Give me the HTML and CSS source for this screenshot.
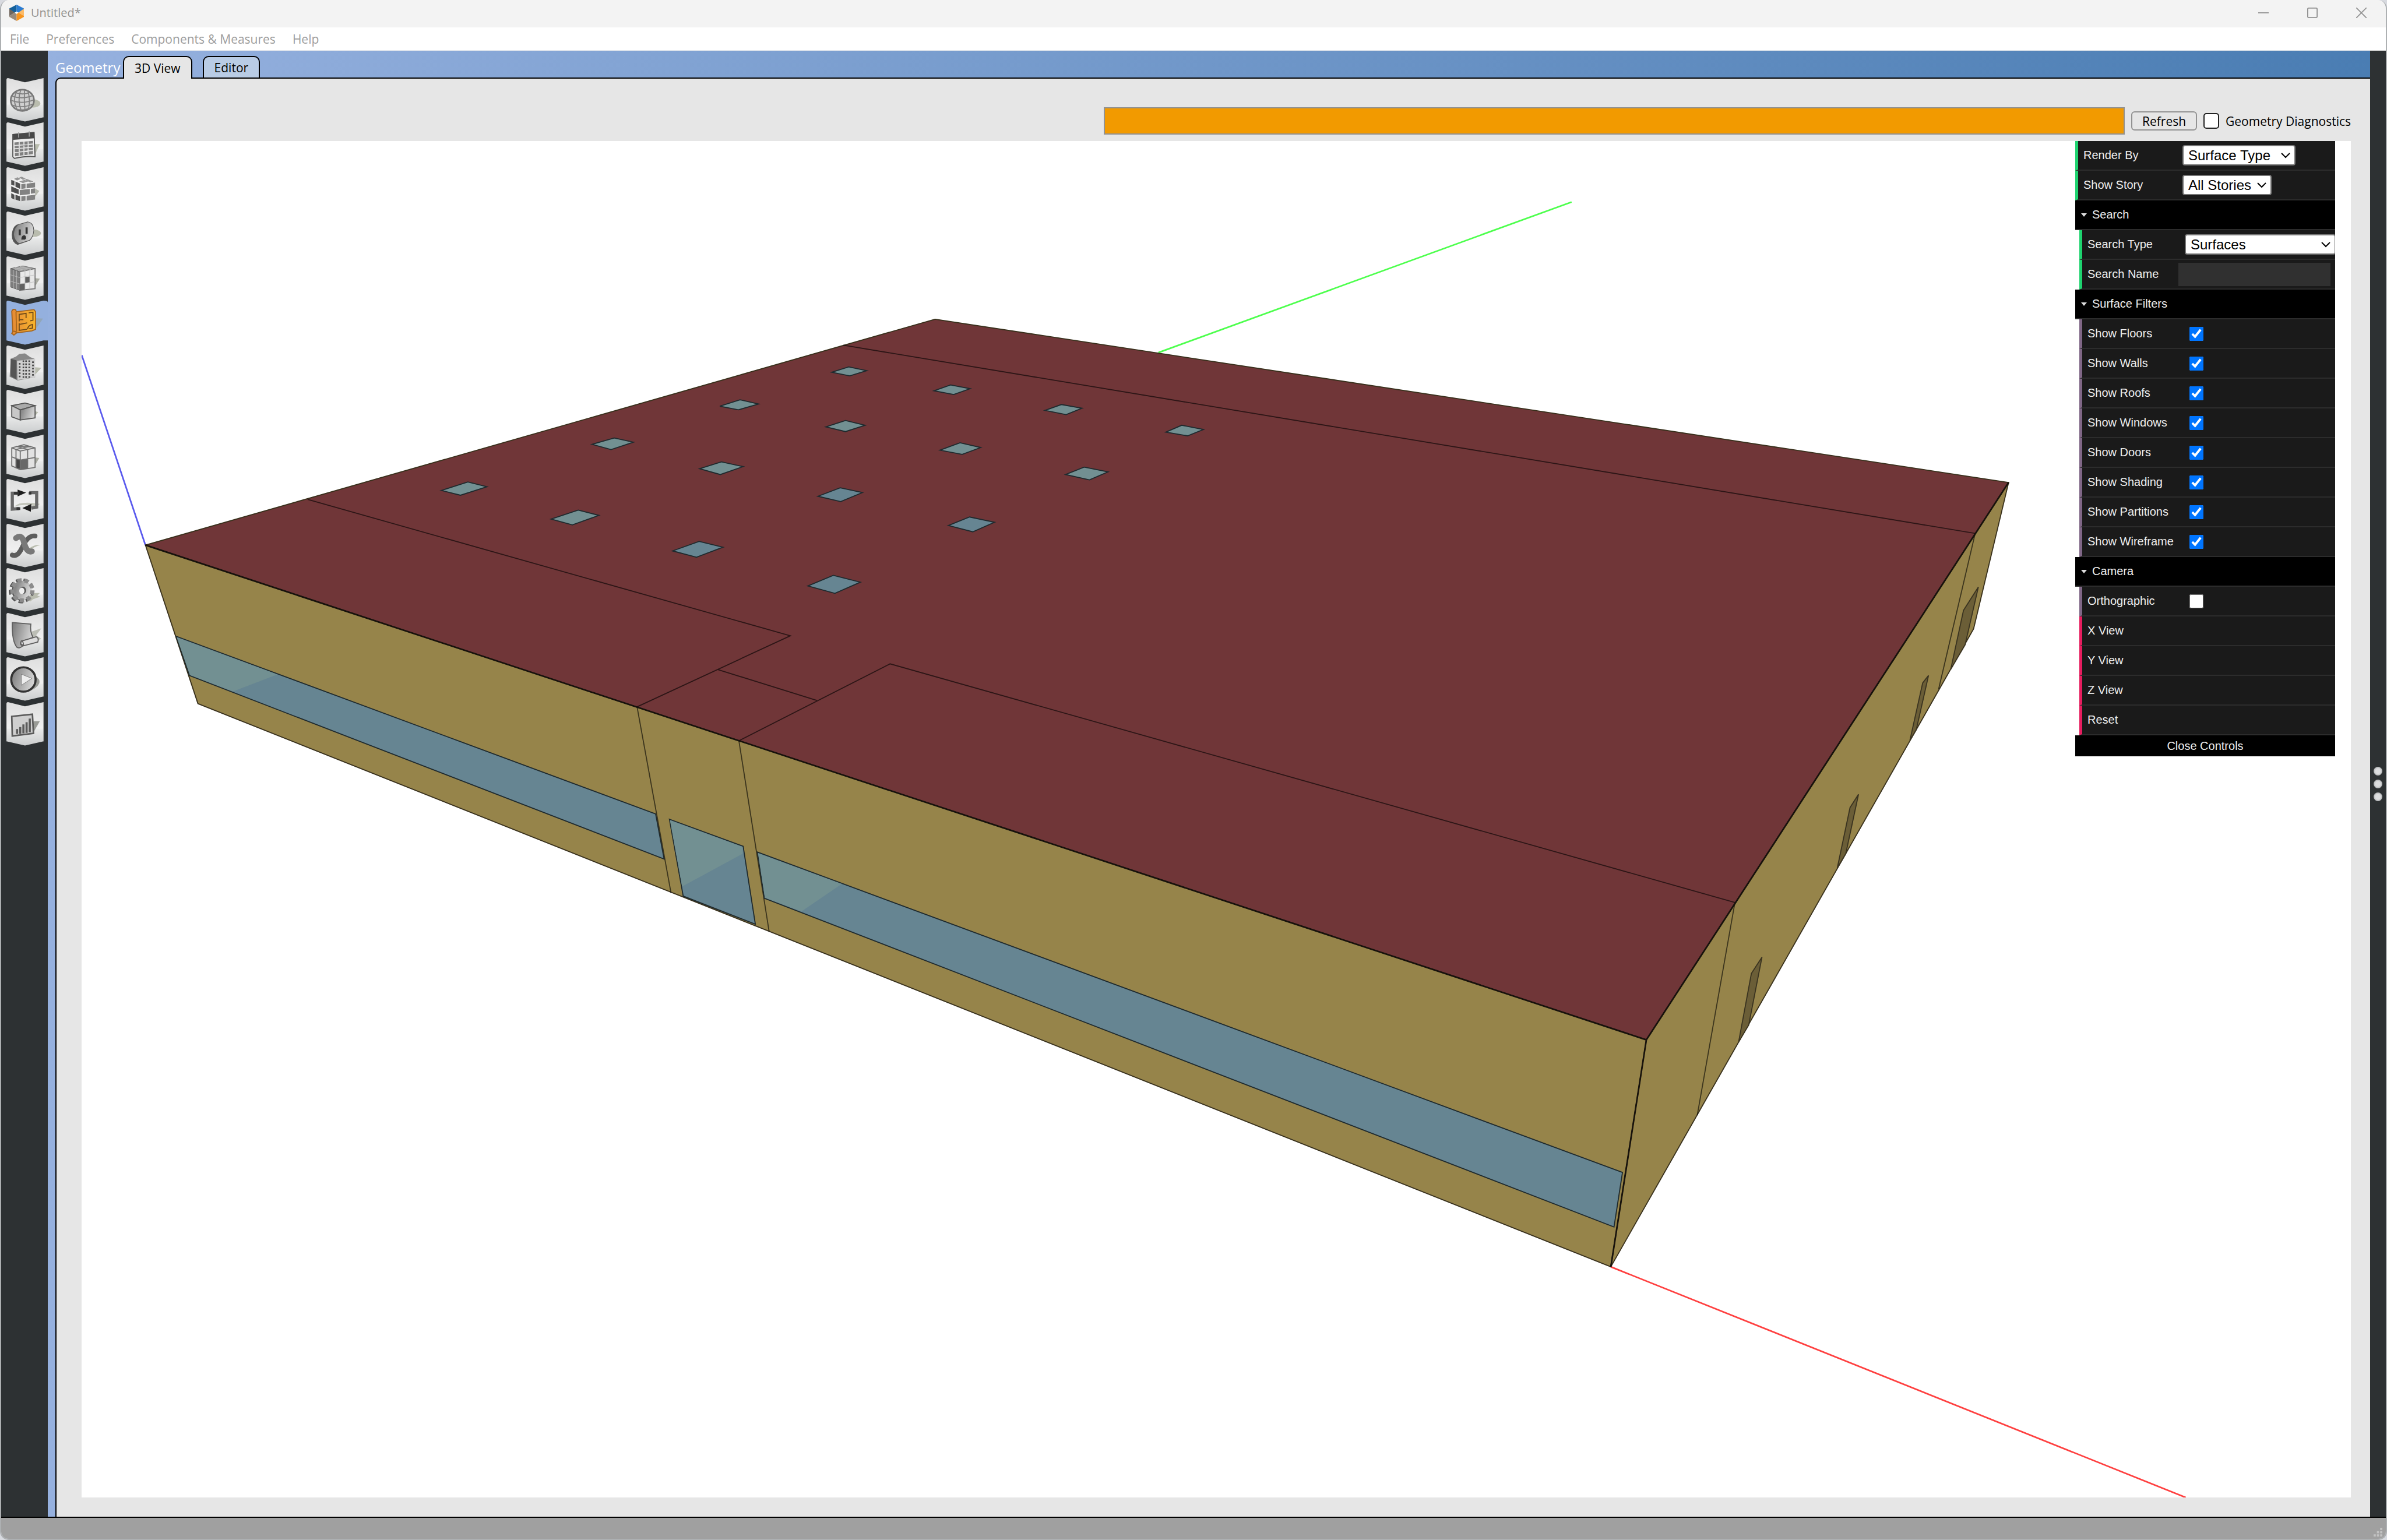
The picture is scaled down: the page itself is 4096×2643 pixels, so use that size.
FILE: index.html
```
<!DOCTYPE html>
<html lang="en">
<head>
    <meta charset="UTF-8">
    <meta name="viewport" content="width=device-width, initial-scale=1.0">
    <title>Untitled*</title>
    <link rel="stylesheet" href="styles.css">
</head>
<body>
    <svg class="defs" aria-hidden="true">
        <defs>
            <linearGradient id="tileFill" x1="0" y1="0" x2="0" y2="1">
                <stop offset="0" stop-color="#dedede"/>
                <stop offset="0.6" stop-color="#f0f0f0"/>
                <stop offset="0.62" stop-color="#e8e9e9"/>
                <stop offset="1" stop-color="#cbcdce"/>
            </linearGradient>
            <linearGradient id="metal" x1="0" y1="0" x2="1" y2="0.3">
                <stop offset="0" stop-color="#777"/>
                <stop offset="1" stop-color="#d4d4d4"/>
            </linearGradient>
            <linearGradient id="amber" x1="0" y1="0" x2="1" y2="0">
                <stop offset="0" stop-color="#e58a35"/>
                <stop offset="1" stop-color="#f7b52c"/>
            </linearGradient>
            <symbol id="tile" viewBox="0 0 88 84">
                <path d="M10 4Q10 1 13 1L45 9L80 1V75L45 83L10 75Z" fill="url(#tileFill)"/>
                <path d="M10 4V75M80 2V75" stroke="#a4a6a6" stroke-width="1"/>
            </symbol>
        </defs>
    </svg>

    <div class="window">
        <header class="titlebar">
            <svg class="logo" viewBox="0 0 27 30">
                <path d="M13.500 0V13L9 15L0 9V7Z" fill="#13609c"/>
                <path d="M13.500 0L27 7V9L18 15L13.500 13Z" fill="#2b7cd3"/>
                <path d="M0 7.500L10 14.500L0 21Z" fill="#6f655c"/>
                <path d="M27 7.500L17 14.500L27 21Z" fill="#fdbb68"/>
                <path d="M0 21L10 14.500L13.500 17V30L0 22.500Z" fill="#998a7b"/>
                <path d="M27 21L17 14.500L13.500 17V30L27 22.500Z" fill="#f7941e"/>
                <path d="M13.500 12.500L17 15L13.500 17L10 15Z" fill="#fff"/>
            </svg>
            <span class="window-title">Untitled*</span>
            <div class="window-buttons">
                <button type="button" aria-label="Minimize"><svg viewBox="0 0 20 20"><path d="M0 10H20"/></svg></button>
                <button type="button" aria-label="Maximize"><svg viewBox="0 0 20 20"><rect x="1" y="1" width="18" height="18" rx="2"/></svg></button>
                <button type="button" aria-label="Close"><svg viewBox="0 0 20 20"><path d="M0 0L20 20M20 0L0 20"/></svg></button>
            </div>
        </header>

        <nav class="menubar">
            <a href="#">File</a>
            <a href="#">Preferences</a>
            <a href="#">Components &amp; Measures</a>
            <a href="#">Help</a>
        </nav>

        <div class="main">
            <div class="rail">
                <button type="button" aria-label="Site"><svg viewBox="0 0 88 84">
                    <use href="#tile"/>
                    <ellipse cx="59" cy="49" rx="15" ry="8" fill="#b9bcae"/>
                    <ellipse cx="40" cy="43" rx="22" ry="20" fill="#cfcfcf" stroke="#757575" stroke-width="3"/>
                    <g fill="none" stroke="#808080" stroke-width="2">
                        <path d="M20 35Q40 42 60 34M18 43Q40 51 62 42M20 52Q40 59 60 50M25 28Q40 34 56 28M26 59Q40 64 56 57"/>
                        <path d="M30 25Q20 43 31 62M37 23Q30 43 38 63M44 23Q43 43 45 63M50 24Q56 43 51 61"/>
                    </g>
                </svg></button>
                <button type="button" aria-label="Schedules"><svg viewBox="0 0 88 84">
                    <use href="#tile"/>
                    <path d="M60 42L73 42L62 66Z" fill="#b9bcae"/>
                    <path d="M22 24L62 20L64 66Q50 64 25 69L22 66Z" fill="#eee" stroke="#555" stroke-width="2"/>
                    <path d="M22 23L63 20V31L23 34Z" fill="#484848"/>
                    <path d="M33 20V30M53 18V28" stroke="#999" stroke-width="2"/>
                    <path d="M25 39L60 36V61L26 65Z" fill="#808080"/>
                    <path d="M25 45L60 42M25 51L60 48M25 58L60 54M34 38V64M43 37V63M51 37V62" stroke="#e4e4e4" stroke-width="2"/>
                </svg></button>
                <button type="button" aria-label="Constructions"><svg viewBox="0 0 88 84">
                    <use href="#tile"/>
                    <path d="M62 40L72 46L60 62Z" fill="#b5b7ad"/>
                    <path d="M19 24L38 19L64 29V62L37 65L19 58Z" fill="#f4f4f4"/>
                    <path d="M19 25L25 27V36L19 34ZM27 28L36 32V42L27 38ZM19 37L33 43V52L19 47ZM19 50L25 53V62L19 59ZM27 53L36 56V65L27 62Z" fill="#505050"/>
                    <path d="M38 33L46 32V41L38 42ZM48 32L64 30V39L48 41ZM35 44L54 42V52L35 54ZM56 42L64 41V50L56 51ZM38 56L46 55V64L38 65ZM48 55L64 53V62L48 64Z" fill="#828282"/>
                    <path d="M24 23L31 20L37 23L30 26ZM34 20L39 19L47 23L41 25ZM34 28L44 25L51 28L41 31ZM48 23L61 28L55 30L45 25Z" fill="#969696"/>
                </svg></button>
                <button type="button" aria-label="Loads"><svg viewBox="0 0 88 84">
                    <use href="#tile"/>
                    <ellipse cx="61" cy="42" rx="14" ry="7" fill="#b9bcae"/>
                    <path d="M29 26L50 20Q62 22 62 37Q61 50 54 56L31 64Q20 60 20 45Q21 31 29 26Z" fill="#555"/>
                    <path d="M33 26L51 21Q61 24 61 37Q60 49 53 55L34 61Q25 56 24 44Q25 31 33 26Z" fill="url(#metal)"/>
                    <path d="M35 35V46M48 31V43" stroke="#333" stroke-width="4"/>
                    <path d="M38 54Q38 47 43 46Q47 46 47 52L45 54Z" fill="#333"/>
                </svg></button>
                <button type="button" aria-label="Space Types"><svg viewBox="0 0 88 84">
                    <use href="#tile"/>
                    <path d="M63 42L73 43L62 61Z" fill="#a9aba1"/>
                    <path d="M18 24L41 19L64 24L35 30Z" fill="#a8a8a8" stroke="#666"/>
                    <path d="M18 24L35 30V65L18 59Z" fill="#7d7d7d" stroke="#555"/>
                    <path d="M35 30L64 24V62L35 65Z" fill="#e8e8e8" stroke="#777" stroke-width="2"/>
                    <path d="M45 40L54 39V50L45 51ZM35 53L45 52V64L35 65Z" fill="#5f5f5f"/>
                    <path d="M18 36L35 41L64 36M18 48L35 53L64 49M23 26V61M29 28V63M45 28V64M54 26V63M26 22L46 28M35 20L56 26" stroke="#bdbdbd" stroke-width="1" fill="none"/>
                </svg></button>
                <button type="button" class="active" aria-label="Geometry"><svg viewBox="0 0 88 84">
                    <path d="M10 4Q10 1 13 1L45 9L80 1Q88 1 88 4V76H80L45 84L10 76Z" fill="#94b0de"/>
                    <path d="M64 34L79 35L63 58Z" fill="#92a6b8"/>
                    <path d="M20 21Q22 16 27 18L29 22L62 18L65 22V55L58 58L29 62L24 66L20 63L22 59Z" fill="url(#amber)" stroke="#a5651e" stroke-width="2"/>
                    <path d="M28 22L29 59M22 59Q27 58 30 62" fill="none" stroke="#a5651e" stroke-width="2"/>
                    <path d="M34 40V27L47 25V34M52 24L60 23V38L55 39M34 37H42M34 44V57L49 55M34 46L49 43M50 55Q50 48 59 46V53L53 54" fill="none" stroke="#704b19" stroke-width="2"/>
                </svg></button>
                <button type="button" aria-label="Facility"><svg viewBox="0 0 88 84">
                    <use href="#tile"/>
                    <path d="M64 42L76 43L64 56Z" fill="#b9bcae"/>
                    <path d="M18 26L28 22L34 17L45 16L55 23L63 26L64 61L31 67L16 60Z" fill="#888"/>
                    <path d="M18 26L29 29V65L18 59Z" fill="#555"/>
                    <path d="M30 30L64 26V61L31 66Z" fill="#d0d0d0"/>
                    <path d="M35 34V64M42 29V63M47 29V62M53 29V62M60 31V60" stroke="#444" stroke-width="3" stroke-dasharray="3 3"/>
                </svg></button>
                <button type="button" aria-label="Spaces"><svg viewBox="0 0 88 84">
                    <use href="#tile"/>
                    <path d="M62 41L70 43L61 54Z" fill="#b9bcae"/>
                    <path d="M20 31L45 26L64 31L36 39Z" fill="#aaa" stroke="#555" stroke-width="2"/>
                    <path d="M20 31L36 39V58L20 52Z" fill="#c8c8c8" stroke="#555" stroke-width="2"/>
                    <path d="M36 39L64 31V54L36 58Z" fill="url(#metal)" stroke="#555" stroke-width="2"/>
                </svg></button>
                <button type="button" aria-label="Thermal Zones"><svg viewBox="0 0 88 84">
                    <use href="#tile"/>
                    <path d="M63 44L72 45L62 62Z" fill="#a9aba1"/>
                    <path d="M20 26L43 20L64 26V63L36 67L20 60Z" fill="#e2e2e2" stroke="#707070" stroke-width="2"/>
                    <path d="M28 46L36 49V66L28 63Z" fill="#444"/>
                    <path d="M36 49L50 47V65L36 67Z" fill="#686868"/>
                    <path d="M20 26L36 32L64 26M20 43L36 49L64 44M36 32V67M28 29V63M50 29V65M28 23L50 29M32 23L56 24M28 29L56 23" stroke="#707070" stroke-width="2" fill="none"/>
                </svg></button>
                <button type="button" aria-label="HVAC Systems"><svg viewBox="0 0 88 84">
                    <use href="#tile"/>
                    <path d="M25 53Q35 42 73 48L68 53Q45 47 25 53Z" fill="#c2c4ba"/>
                    <path d="M31 28H21V58L34 57M53 27H67V54L57 56" fill="none" stroke="#686868" stroke-width="6"/>
                    <path d="M31 21L47 27L31 34ZM57 48L40 56L56 63Z" fill="#1d1d1d"/>
                    <path d="M24 28H33M52 28H57M29 57H36" stroke="#333" stroke-width="5"/>
                </svg></button>
                <button type="button" aria-label="Variables"><svg viewBox="0 0 88 84">
                    <use href="#tile"/>
                    <path d="M52 48Q64 39 74 41Q63 44 54 51Z" fill="#b9bcae"/>
                    <path d="M21 60Q31 64 39 47Q50 22 64 24" fill="none" stroke="#5c5c5c" stroke-width="9" stroke-linecap="round"/>
                    <path d="M28 28Q39 20 43 36Q48 56 58 53" fill="none" stroke="#787878" stroke-width="11" stroke-linecap="round"/>
                </svg></button>
                <button type="button" aria-label="Simulation Settings"><svg viewBox="0 0 88 84">
                    <use href="#tile"/>
                    <path d="M45 58L60 48L73 48L68 53L74 55L60 60L55 64Z" fill="#b9bcae"/>
                    <g transform="translate(40 43)">
                        <circle r="18" fill="#555" cx="-2" cy="1"/>
                        <circle r="19" fill="none" stroke="#505050" stroke-width="9" stroke-dasharray="8 5.260" cx="-2" cy="1"/>
                        <circle r="18" fill="url(#metal)"/>
                        <circle r="19" fill="none" stroke="#8c8c8c" stroke-width="8" stroke-dasharray="8 5.260"/>
                        <circle r="15" fill="url(#metal)"/>
                        <ellipse cx="1" cy="0" rx="6" ry="7" fill="#555"/>
                        <ellipse cx="-1" cy="1" rx="5" ry="6" fill="#efefef"/>
                    </g>
                </svg></button>
                <button type="button" aria-label="Measures"><svg viewBox="0 0 88 84">
                    <use href="#tile"/>
                    <path d="M55 37L76 30L66 43L76 50L60 56Z" fill="#bcbeb5"/>
                    <path d="M21 19L56 22Q54 36 60 47Q50 52 38 54Q34 60 42 62Q35 69 30 66Q20 55 21 19Z" fill="url(#metal)" stroke="#606060" stroke-width="2"/>
                    <path d="M39 54L66 46Q72 48 69 56L42 63Q43 57 39 54Z" fill="#ddd" stroke="#606060" stroke-width="2"/>
                    <path d="M42 63Q34 62 38 55" fill="none" stroke="#606060" stroke-width="2"/>
                </svg></button>
                <button type="button" aria-label="Run Simulation"><svg viewBox="0 0 88 84">
                    <use href="#tile"/>
                    <path d="M62 38Q74 40 72 50Q68 60 50 66Z" fill="#999b96"/>
                    <ellipse cx="42" cy="43" rx="23" ry="23" fill="url(#metal)" stroke="#333" stroke-width="4"/>
                    <path d="M38 33L58 41L38 54Z" fill="#eee" stroke="#777"/>
                </svg></button>
                <button type="button" aria-label="Results Summary"><svg viewBox="0 0 88 84">
                    <use href="#tile"/>
                    <path d="M61 37L73 37L60 60Z" fill="#999b96"/>
                    <path d="M20 28L59 24L61 60L21 65Z" fill="#cfcfcf" stroke="#5b5b5b" stroke-width="3"/>
                    <path d="M30 61V52M36 61V48M42 60V43M48 59V39M54 58V32" stroke="#5b5b5b" stroke-width="4"/>
                </svg></button>
            </div>

            <main class="content">
                <div class="tabs">
                    <span class="section-name">Geometry</span>
                    <button type="button" class="tab selected">3D View</button>
                    <button type="button" class="tab">Editor</button>
                </div>
                <div class="panel">
                    <div class="toolbar">
                        <div class="progress" role="progressbar" aria-label="Loading"></div>
                        <button type="button" class="refresh">Refresh</button>
                        <label class="diagnostics"><input type="checkbox">Geometry Diagnostics</label>
                    </div>
                    <div class="viewport">
                        <!-- building model -->
                        <svg class="scene" viewBox="154 266 4278 2558" role="img" aria-label="Building model">
                            <g fill="none" stroke-width="3">
                                <path d="M154 670L274 1028" stroke="#5a5aee"/>
                                <path d="M2184 665L2963 381" stroke="#4dff4d"/>
                                <path d="M3037 2389L4121 2824" stroke="#ff4040"/>
                            </g>
                            <g stroke="#38301c" stroke-width="2" stroke-linejoin="round">
                                <path class="roof" d="M274 1028L1763 602L3787 910L3104 1961Z"/>
                                <path class="wall" d="M274 1028L3104 1961L3037 2389L373 1327Z"/>
                                <path class="wall" d="M3104 1961L3787 910L3721 1186L3037 2389Z"/>
                            </g>
                            <g class="edges">
                                <path d="M1590 651L3724 1006L3655 1300"/>
                                <path d="M580 942L1490 1199L1201 1333L1265 1684"/>
                                <path d="M1354 1263L1540 1321"/>
                                <path d="M1450 1757L1393 1397L1678 1252L3271 1702L3200 2103"/>
                            </g>
                            <path class="ridge" d="M274 1028L3104 1961L3787 910M3104 1961L3037 2389"/>
                            <g class="glass">
                                <path d="M332 1200L1236 1535L1252 1620L357 1274Z"/>
                                <path d="M1262 1545L1401 1596L1424 1743L1288 1690Z"/>
                                <path d="M1428 1607L3059 2211L3043 2314L1441 1694Z"/>
                                <path d="M1542 936L1584 920L1626 929L1585 946Z"/>
                                <path d="M1788 991L1828 975L1875 985L1834 1003Z"/>
                                <path d="M1268 1039L1318 1021L1363 1032L1313 1051Z"/>
                                <path d="M1523 1105L1571 1085L1622 1098L1574 1119Z"/>
                            </g>
                            <g fill="#729092">
                                <path d="M333 1202L523 1272L439 1304L358 1273Z"/>
                                <path d="M1263 1547L1400 1597V1610L1286 1672Z"/>
                                <path d="M1429 1609L1587 1667L1511 1719L1442 1693Z"/>
                            </g>
                            <g class="glass lit">
                                <path d="M1568 702L1600 692L1634 699L1602 709Z"/>
                                <path d="M1761 737L1792 726L1829 733L1798 744Z"/>
                                <path d="M1970 774L2001 763L2040 770L2010 782Z"/>
                                <path d="M2198 815L2228 802L2269 810L2239 822Z"/>
                                <path d="M1357 766L1395 754L1430 762L1392 773Z"/>
                                <path d="M1557 805L1594 793L1631 802L1594 814Z"/>
                                <path d="M1772 849L1810 835L1849 844L1814 857Z"/>
                                <path d="M2009 895L2044 881L2089 890L2054 905Z"/>
                                <path d="M1116 838L1158 826L1194 834L1152 848Z"/>
                                <path d="M1319 884L1360 871L1401 880L1358 895Z"/>
                                <path d="M832 925L882 909L918 918L868 934Z"/>
                                <path d="M1039 979L1090 962L1129 972L1079 990Z"/>
                            </g>
                            <g class="door">
                                <path d="M3302 1836L3322 1805L3297 1933L3278 1965Z"/>
                                <path d="M3488 1523L3504 1498L3480 1610L3464 1637Z"/>
                                <path d="M3625 1288L3636 1274L3613 1376L3601 1396Z"/>
                                <path d="M3702 1151L3730 1107L3705 1216L3678 1262Z"/>
                            </g>
                        </svg>

                        <div class="gui">
                            <div class="row option">
                                <label for="renderBy">Render By</label>
                                <span class="select"><select id="renderBy"><option>Surface Type</option></select><svg viewBox="0 0 16 10"><path d="M1 1L8 8L15 1"/></svg></span>
                            </div>
                            <div class="row option">
                                <label for="showStory">Show Story</label>
                                <span class="select story"><select id="showStory"><option>All Stories</option></select><svg viewBox="0 0 16 10"><path d="M1 1L8 8L15 1"/></svg></span>
                            </div>

                            <div class="row title"><svg viewBox="0 0 10 7"><path d="M0 1H10L5 7Z"/></svg>Search</div>
                            <div class="folder">
                                <div class="row option">
                                    <label for="searchType">Search Type</label>
                                    <span class="select wide"><select id="searchType"><option>Surfaces</option></select><svg viewBox="0 0 16 10"><path d="M1 1L8 8L15 1"/></svg></span>
                                </div>
                                <div class="row option">
                                    <label for="searchName">Search Name</label>
                                    <input type="text" id="searchName">
                                </div>
                            </div>

                            <div class="row title"><svg viewBox="0 0 10 7"><path d="M0 1H10L5 7Z"/></svg>Surface Filters</div>
                            <div class="folder">
                                <div class="row boolean"><label for="floors">Show Floors</label><input type="checkbox" id="floors" checked></div>
                                <div class="row boolean"><label for="walls">Show Walls</label><input type="checkbox" id="walls" checked></div>
                                <div class="row boolean"><label for="roofs">Show Roofs</label><input type="checkbox" id="roofs" checked></div>
                                <div class="row boolean"><label for="windows">Show Windows</label><input type="checkbox" id="windows" checked></div>
                                <div class="row boolean"><label for="doors">Show Doors</label><input type="checkbox" id="doors" checked></div>
                                <div class="row boolean"><label for="shading">Show Shading</label><input type="checkbox" id="shading" checked></div>
                                <div class="row boolean"><label for="partitions">Show Partitions</label><input type="checkbox" id="partitions" checked></div>
                                <div class="row boolean"><label for="wireframe">Show Wireframe</label><input type="checkbox" id="wireframe" checked></div>
                            </div>

                            <div class="row title"><svg viewBox="0 0 10 7"><path d="M0 1H10L5 7Z"/></svg>Camera</div>
                            <div class="folder">
                                <div class="row boolean"><label for="ortho">Orthographic</label><input type="checkbox" id="ortho"></div>
                                <button type="button" class="row function">X View</button>
                                <button type="button" class="row function">Y View</button>
                                <button type="button" class="row function">Z View</button>
                                <button type="button" class="row function">Reset</button>
                            </div>
                            <button type="button" class="close-controls">Close Controls</button>
                        </div>
                    </div>
                </div>
            </main>

            <div class="drawer-handle"><i></i><i></i><i></i></div>
        </div>

        <footer class="statusbar">
            <svg viewBox="0 0 16 16"><path d="M12 0h4v4h-4zM6 6h4v4h-4zM12 6h4v4h-4zM0 12h4v4h-4zM6 12h4v4h-4zM12 12h4v4h-4z"/></svg>
        </footer>
    </div>
</body>
</html>
```
FILE: styles.css
```
* {
    box-sizing: border-box;
}
body {
    margin: 0;
    height: 100vh;
    background: #d8dae0;
    font-family: "Open Sans", "Noto Sans", sans-serif;
    font-size: 21px;
}
button {
    border: none;
    background: none;
    padding: 0;
    margin: 0;
    font: inherit;
    color: inherit;
}
.defs {
    position: absolute;
    width: 0;
    height: 0;
}
.window {
    height: 100%;
    display: flex;
    flex-direction: column;
    border: 2px solid #adb0b2;
    border-top: none;
    border-radius: 15px;
    overflow: hidden;
}

/* title bar and menu */
.titlebar {
    height: 47px;
    flex: none;
    display: flex;
    align-items: center;
    gap: 12px;
    padding: 0 0 4px 14px;
    background: #f3f3f3;
    color: #929292;
}
.logo {
    width: 25px;
    height: 28px;
}
.window-title {
    font-size: 20px;
}
.window-buttons {
    margin-left: auto;
    align-self: stretch;
    display: flex;
}
.window-buttons button {
    width: 84px;
}
.window-buttons svg {
    display: block;
    margin: 0 auto;
    width: 18px;
    height: 18px;
    fill: none;
    stroke: #929292;
    stroke-width: 2;
}
.menubar {
    height: 40px;
    flex: none;
    display: flex;
    align-items: center;
    gap: 29px;
    padding-left: 15px;
    background: #fff;
    border-bottom: 1px solid #f0f0f0;
}
.menubar a {
    color: #9d9d9d;
    text-decoration: none;
}

.main {
    flex: 1;
    min-height: 0;
    display: flex;
    background: #2d3133;
    border-bottom: 2px solid #000;
}

/* left rail */
.rail {
    width: 80px;
    height: 1193px;
    flex: none;
    padding-top: 46px;
    display: flex;
    flex-direction: column;
}
.rail button {
    flex: 1;
    min-height: 0;
}
.rail svg {
    display: block;
    width: 100%;
    height: 100%;
}

.content {
    flex: 1;
    min-width: 0;
    display: flex;
    flex-direction: column;
    padding-left: 13px;
    background: linear-gradient(90deg, #96b1df, #4a7db3);
}
.tabs {
    height: 46px;
    flex: none;
    display: flex;
    align-items: flex-end;
    z-index: 1;
}
.section-name {
    width: 116px;
    color: #fff;
    font-size: 24px;
    line-height: 34px;
}
.tab {
    height: 37px;
    padding: 0 18px;
    margin-right: 18px;
    border: 2px solid #000;
    border-bottom: none;
    border-radius: 10px 10px 0 0;
    background: #b9cce5;
    color: #000;
}
.tab.selected {
    height: 39px;
    margin-bottom: -2px;
    background: #e6e6e6;
}
.panel {
    flex: 1;
    min-height: 0;
    display: flex;
    flex-direction: column;
    padding: 0 33px 33px 43px;
    background: #e6e6e6;
    border-top: 2px solid #000;
    border-left: 2px solid #000;
    border-top-left-radius: 9px;
}
.toolbar {
    height: 107px;
    flex: none;
    display: flex;
    align-items: center;
    justify-content: flex-end;
    gap: 11px;
    padding-top: 38px;
}
.progress {
    flex: 0 0 45%;
    height: 47px;
    background: #f29a00;
    border: 2px solid #929292;
}
.refresh {
    width: 113px;
    height: 33px;
    border: 2px solid #929292;
    border-radius: 6px;
    line-height: 28px;
}
.diagnostics {
    display: flex;
    align-items: center;
    gap: 11px;
    line-height: 28px;
    white-space: nowrap;
}
.diagnostics input {
    appearance: none;
    width: 27px;
    height: 27px;
    margin: 0;
    background: #fff;
    border: 2px solid #222;
    border-radius: 5px;
}

/* 3D view */
.viewport {
    flex: 1;
    min-height: 0;
    display: grid;
    grid-template-columns: minmax(0, 1fr);
    grid-template-rows: minmax(0, 1fr);
    background: #fff;
}
.scene {
    grid-area: 1 / 1;
    width: 100%;
    height: 100%;
}
.roof {
    fill: #703638;
}
.wall {
    fill: #96844a;
}
.edges {
    fill: none;
    stroke: #000;
    stroke-opacity: 0.6;
    stroke-width: 2;
}
.ridge {
    fill: none;
    stroke: #17120c;
    stroke-width: 3;
    stroke-linejoin: round;
}
.glass {
    fill: #668592;
    stroke: #1f2a2e;
    stroke-width: 2;
}
.lit {
    fill: #729092;
}
.door {
    fill: #6b5e37;
    stroke: #3a3320;
    stroke-width: 2;
}

/* controls over the view */
.gui {
    grid-area: 1 / 1;
    justify-self: end;
    align-self: start;
    width: 446px;
    margin-right: 27px;
    overflow: hidden;
    font-family: "Liberation Sans", Arial, sans-serif;
    font-size: 20px;
    color: #eee;
}
.row {
    width: 100%;
    height: 51px;
    display: flex;
    align-items: center;
    background: #1a1a1a;
    border: 0 solid #2c2c2c;
    border-bottom-width: 2px;
    border-left-width: 5px;
}
.row label {
    width: 172px;
    flex: none;
    padding-left: 9px;
}
.folder {
    padding-left: 7px;
}
.folder .row label {
    width: 165px;
}
.option {
    border-left-color: #1ed36f;
}
.boolean {
    border-left-color: #806787;
}
.function {
    border-left-color: #e61d5f;
    padding-left: 9px;
}
.title {
    background: #000;
    border-left-width: 0;
    padding-left: 10px;
    gap: 9px;
}
.title svg {
    width: 10px;
    height: 7px;
    fill: #ddd;
}
.select {
    position: relative;
    flex: none;
    width: 194px;
    margin-left: 7px;
}
.story {
    width: 153px;
}
.wide {
    width: 259px;
    margin-left: 11px;
}
.select select {
    appearance: none;
    display: block;
    width: 100%;
    height: 35px;
    padding: 0 8px;
    font: 24px "Liberation Sans", Arial, sans-serif;
    color: #000;
    background: #fff;
    border: 2px solid #767676;
    border-radius: 4px;
}
.select svg {
    position: absolute;
    right: 9px;
    top: 13px;
    width: 16px;
    height: 10px;
    fill: none;
    stroke: #000;
    stroke-width: 2;
    pointer-events: none;
}
.row input[type="text"] {
    width: 261px;
    height: 40px;
    border: none;
    padding: 0 8px;
    background: #303030;
    color: #1ed36f;
    font: inherit;
}
.row input[type="checkbox"] {
    width: 24px;
    height: 24px;
    margin: 0 0 0 19px;
    accent-color: #0075ff;
}
.close-controls {
    display: block;
    width: 100%;
    height: 36px;
    background: #000;
}

.drawer-handle {
    width: 27px;
    flex: none;
    display: flex;
    flex-direction: column;
    align-items: center;
    justify-content: center;
    gap: 7px;
}
.drawer-handle i {
    width: 15px;
    height: 15px;
    border-radius: 50%;
    background: radial-gradient(#dcdddf 40%, #85888a);
}

.statusbar {
    height: 36px;
    flex: none;
    display: flex;
    justify-content: flex-end;
    align-items: flex-end;
    padding: 0 6px 4px 0;
    background: #a0a0a0;
}
.statusbar svg {
    width: 15px;
    height: 15px;
    fill: #c3c3c3;
}
```
